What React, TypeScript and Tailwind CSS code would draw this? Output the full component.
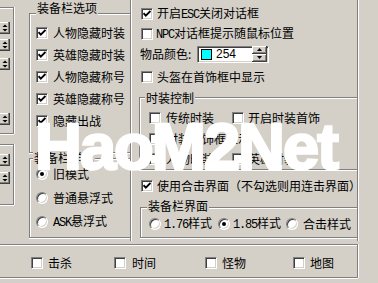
import React from "react";

function Box({ checked }: { checked?: boolean }) {
  return (
    <span className="relative inline-block w-[12px] h-[12px] shrink-0 bg-white border border-t-[#808080] border-l-[#808080] border-r-white border-b-white shadow-[inset_1px_1px_0_#404040,inset_-1px_-1px_0_#d4d0c8]">
      {checked && (
        <svg className="absolute left-[1px] top-[1px]" width="8" height="8" viewBox="0 0 8 8">
          <path d="M0.5 3.2 L2.8 5.6 L7.5 0.9" stroke="#000" strokeWidth="1.9" fill="none" />
        </svg>
      )}
    </span>
  );
}

function Radio({ checked }: { checked?: boolean }) {
  return (
    <span className="relative inline-flex items-center justify-center w-[12px] h-[12px] shrink-0 rounded-full bg-white border border-t-[#808080] border-l-[#808080] border-r-white border-b-white shadow-[inset_1px_1px_0_#404040,inset_-1px_-1px_0_#d4d0c8]">
      {checked && <span className="w-[4px] h-[4px] rounded-full bg-black" />}
    </span>
  );
}

function Mono({ children }: { children: React.ReactNode }) {
  return <span className="[font-family:'Liberation_Mono',monospace] tracking-[-1.2px]">{children}</span>;
}

function MiniBtn() {
  return (
    <div className="w-[10px] h-[12px] bg-[#d4d0c8] border-r border-b border-r-[#404040] border-b-[#404040] shadow-[inset_-1px_-1px_0_#808080,inset_0_1px_0_#fff] flex items-center justify-center">
      <svg width="6" height="8" viewBox="0 0 6 8">
        <path d="M3 0.5 L5.5 3 L0.5 3 Z" fill="#000" />
        <path d="M0.5 5 L5.5 5 L3 7.5 Z" fill="#000" />
      </svg>
    </div>
  );
}

function SpinBtn({ up }: { up?: boolean }) {
  return (
    <div className="w-[15px] h-[8px] bg-[#d4d0c8] border-r border-b border-r-[#404040] border-b-[#404040] shadow-[inset_1px_1px_0_#fff,inset_-1px_-1px_0_#808080] flex items-center justify-center">
      <svg width="5" height="3" viewBox="0 0 5 3">
        {up ? <path d="M2.5 0 L5 3 L0 3 Z" fill="#000" /> : <path d="M0 0 L5 0 L2.5 3 Z" fill="#000" />}
      </svg>
    </div>
  );
}

export default function App() {
  return (
    <div className="relative w-[378px] h-[283px] overflow-hidden bg-[#d4d0c8] text-black text-[12px] leading-[14px] [font-family:'Noto_Sans_CJK_SC','Noto_Sans',sans-serif]">
      {/* upper section */}
      <div className="flex h-[244px]">
        {/* left strip */}
        <div className="w-[14px] flex flex-col">
          <div className="mt-[7px] h-[127px] border-t border-r border-b border-[#808080] shadow-[inset_0_1px_0_#fff,1px_0_0_#fff,0_1px_0_#fff] flex flex-col">
            <div className="mt-[14px]"><MiniBtn /></div>
            <div className="mt-[5px]"><MiniBtn /></div>
            <div className="mt-[7px]"><MiniBtn /></div>
            <div className="mt-[43px]"><MiniBtn /></div>
          </div>
          <div className="mt-[10px] h-[61px] border-t border-r border-b border-[#808080] shadow-[inset_0_1px_0_#fff,1px_0_0_#fff,0_1px_0_#fff] flex flex-col">
            <div className="mt-[9px]"><MiniBtn /></div>
            <div className="mt-[6px]"><MiniBtn /></div>
          </div>
        </div>

        {/* left column */}
        <div className="w-[117px] h-[241px] border-r border-[#808080] shadow-[1px_0_0_#fff] pl-[15px] flex flex-col">
          <div className="relative mt-[13px] h-[140px] border border-r-0 border-[#808080] shadow-[inset_1px_1px_0_#fff,0_1px_0_#fff] pt-[8px] pl-[6px]">
            <span className="absolute left-[6px] top-[-13px] px-[1px] bg-[#d4d0c8]">装备栏选项</span>
            {["人物隐藏时装", "英雄隐藏时装", "人物隐藏称号", "英雄隐藏称号", "隐藏出战"].map((t) => (
              <div key={t} className="flex items-center h-[22px]">
                <Box checked />
                <span className="ml-[5px] whitespace-nowrap">{t}</span>
              </div>
            ))}
          </div>
          <div className="relative mt-[5px] h-[80px] border border-r-0 border-[#808080] shadow-[inset_1px_1px_0_#fff,0_1px_0_#fff] pt-[3px] pl-[6px]">
            <span className="absolute left-[3px] top-[-8px] px-[1px] bg-[#d4d0c8]">装备栏样式</span>
            <div className="flex items-center h-[24px]">
              <Radio checked />
              <span className="ml-[5px]">旧模式</span>
            </div>
            <div className="flex items-center h-[24px]">
              <Radio />
              <span className="ml-[5px]">普通悬浮式</span>
            </div>
            <div className="flex items-center h-[24px]">
              <Radio />
              <span className="ml-[5px] whitespace-nowrap"><Mono>ASK</Mono>悬浮式</span>
            </div>
          </div>
        </div>

        {/* right column */}
        <div className="w-[227px] h-[241px] border-r border-[#808080] shadow-[1px_0_0_#fff] pl-[8px] pt-[4px] flex flex-col">
          <div className="flex items-center h-[20px] pl-[2px]">
            <Box checked />
            <span className="ml-[4px] whitespace-nowrap">开启<Mono>ESC</Mono>关闭对话框</span>
          </div>
          <div className="flex items-center h-[20px] pl-[2px]">
            <Box />
            <span className="ml-[3px] whitespace-nowrap"><Mono>NPC</Mono>对话框提示随鼠标位置</span>
          </div>
          <div className="flex items-center h-[20px]">
            <span className="ml-[1px] w-[57px] whitespace-nowrap">物品颜色:</span>
            <div className="w-[72px] h-[17px] flex items-center bg-white border border-t-[#808080] border-l-[#808080] border-r-white border-b-white shadow-[inset_1px_1px_0_#404040,inset_-1px_-1px_0_#d4d0c8]">
              <span className="ml-[3px] w-[11px] h-[11px] bg-[#00ffff] border border-black" />
              <span className="ml-[4px] [font-family:'Liberation_Sans',Arial,sans-serif] text-[12px] leading-[14px]">254</span>
              <div className="ml-auto mr-[1px] flex flex-col">
                <SpinBtn up />
                <SpinBtn />
              </div>
            </div>
          </div>
          <div className="flex items-center h-[26px] pl-[2px]">
            <Box />
            <span className="ml-[4px] whitespace-nowrap">头盔在首饰框中显示</span>
          </div>

          <div className="relative mt-[7px] h-[73px] border border-r-0 border-[#808080] shadow-[inset_1px_1px_0_#fff,0_1px_0_#fff] pt-[9px] pl-[9px]">
            <span className="absolute left-[5px] top-[-7px] px-[1px] bg-[#d4d0c8]">时装控制</span>
            <div className="flex items-center h-[21px]">
              <div className="w-[83px] flex items-center">
                <Box />
                <span className="ml-[5px] whitespace-nowrap">传统时装</span>
              </div>
              <div className="flex items-center">
                <Box />
                <span className="ml-[4px] whitespace-nowrap">开启时装首饰</span>
              </div>
            </div>
            <div className="flex items-center h-[21px]">
              <Box />
              <span className="ml-[5px] whitespace-nowrap">时装首饰框显示</span>
            </div>
            <div className="flex items-center h-[20px]">
              <div className="w-[83px] flex items-center">
                <Box />
                <span className="ml-[5px] whitespace-nowrap">人物时装</span>
              </div>
              <div className="flex items-center">
                <Box />
                <span className="ml-[4px] whitespace-nowrap">英雄时装</span>
              </div>
            </div>
          </div>

          <div className="flex items-center h-[32px] pl-[2px]">
            <Box checked />
            <span className="ml-[4px] whitespace-nowrap">使用合击界面（不勾选则用连击界面）</span>
          </div>

          <div className="relative mt-[5px] ml-[1px] h-[31px] border border-r-0 border-[#808080] shadow-[inset_1px_1px_0_#fff,0_1px_0_#fff] pt-[4px] pl-[8px]">
            <span className="absolute left-[6px] top-[-9px] px-[1px] bg-[#d4d0c8]">装备栏界面</span>
            <div className="flex items-center h-[24px]">
              <div className="w-[69px] flex items-center">
                <Radio />
                <span className="ml-[3px] whitespace-nowrap"><Mono>1.76</Mono>样式</span>
              </div>
              <div className="w-[68px] flex items-center">
                <Radio checked />
                <span className="ml-[3px] whitespace-nowrap"><Mono>1.85</Mono>样式</span>
              </div>
              <div className="flex items-center">
                <Radio />
                <span className="ml-[5px] whitespace-nowrap">合击样式</span>
              </div>
            </div>
          </div>
        </div>
      </div>

      {/* bottom frame */}
      <div className="w-[358px] h-[34px] border-t border-r border-b border-[#808080] shadow-[inset_0_1px_0_#fff,1px_0_0_#fff,0_1px_0_#fff] pt-[4px] pl-[31px] flex items-center">
        <div className="w-[83px] flex items-center">
          <Box />
          <span className="ml-[5px]">击杀</span>
        </div>
        <div className="w-[91px] flex items-center">
          <Box />
          <span className="ml-[6px]">时间</span>
        </div>
        <div className="w-[88px] flex items-center">
          <Box />
          <span className="ml-[5px]">怪物</span>
        </div>
        <div className="flex items-center">
          <Box />
          <span className="ml-[5px]">地图</span>
        </div>
      </div>

      {/* watermark */}
      <div className="absolute left-[35px] top-[114px] text-[65px] leading-[66px] font-bold tracking-[-2px] text-white whitespace-nowrap [-webkit-text-stroke:2.5px_#fff] [font-family:'Liberation_Sans',Arial,sans-serif] pointer-events-none">
        HaoM2Net
      </div>
    </div>
  );
}
